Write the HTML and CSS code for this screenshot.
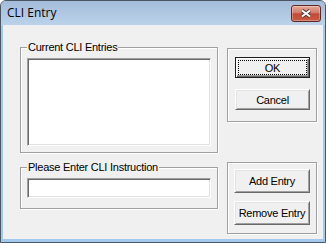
FILE: index.html
```html
<!DOCTYPE html>
<html lang="en">
<head>
    <meta charset="UTF-8">
    <title>CLI Entry</title>
    <link rel="stylesheet" href="styles.css">
</head>
<body>
    <div class="window">
        <div class="titlebar">
            <span class="title">CLI Entry</span>
            <button class="close" aria-label="Close">
                <svg width="12" height="9" viewBox="0 0 12 9">
                    <path d="M2 1.5 L10 7.5 M10 1.5 L2 7.5" stroke="#4a3a3a" stroke-width="3.8" fill="none"/>
                    <path d="M2 1.5 L10 7.5 M10 1.5 L2 7.5" stroke="#fff" stroke-width="2" fill="none"/>
                </svg>
            </button>
        </div>
        <div class="client">
            <div class="col-left">
                <div class="group group-entries">
                    <span class="legend">Current CLI Entries</span>
                    <div class="listbox"></div>
                </div>
                <div class="group group-input">
                    <span class="legend">Please Enter CLI Instruction</span>
                    <input class="edit" type="text">
                </div>
            </div>
            <div class="col-right">
                <div class="group group-dialog">
                    <button class="btn btn-default"><span class="focus">OK</span></button>
                    <button class="btn">Cancel</button>
                </div>
                <div class="group group-actions">
                    <button class="btn btn-tall">Add Entry</button>
                    <button class="btn btn-tall">Remove Entry</button>
                </div>
            </div>
        </div>
    </div>
</body>
</html>
```
FILE: styles.css
```css
* {
    box-sizing: border-box;
}
body {
    margin: 0;
    background: #fff;
    font-family: "Liberation Sans", Arial, sans-serif;
    font-size: 11px;
    letter-spacing: -0.25px;
    color: #000;
}
.window {
    width: 326px;
    height: 243px;
    border: 1px solid #4b5663;
    border-radius: 6px 6px 0 0;
    background: #a3caec;
    display: flex;
    flex-direction: column;
    overflow: hidden;
}
.titlebar {
    height: 24px;
    flex: none;
    display: flex;
    align-items: flex-start;
    justify-content: space-between;
    padding: 4px 4px 0 6px;
    background: linear-gradient(#a4bcda, #bbd2ea);
}
.title {
    font-family: "Open Sans", "Noto Sans", sans-serif;
    font-size: 12px;
    line-height: 16px;
    letter-spacing: 0;
}
.close {
    width: 30px;
    height: 17px;
    padding: 0;
    border: 1px solid #5b2a24;
    border-radius: 3px;
    background: linear-gradient(#e8a898, #d57a68 45%, #c24a35 52%, #cc5a42);
    box-shadow: inset 0 0 0 1px rgba(255, 255, 255, 0.3);
    display: flex;
    align-items: center;
    justify-content: center;
}
.client {
    height: 214px;
    flex: none;
    margin: 0 2px;
    background: #f0f0f0;
    display: flex;
    padding: 22px 0 0 17px;
}
.col-left {
    width: 198px;
    display: flex;
    flex-direction: column;
    gap: 14px;
}
.col-right {
    margin: 1px 0 0 9px;
    display: flex;
    flex-direction: column;
    gap: 40px;
}
/* etched group frame */
.group {
    position: relative;
    border: 1px solid #a0a0a0;
    box-shadow: inset 1px 1px #fff, 1px 1px #fff;
    display: flex;
    flex-direction: column;
    align-items: flex-start;
}
.legend {
    position: absolute;
    top: -7px;
    left: 6px;
    padding: 0 1px;
    line-height: 13px;
    background: #f0f0f0;
    white-space: nowrap;
}
.group-entries {
    height: 106px;
    padding: 10px 6px 0 6px;
}
.group-input {
    height: 42px;
    padding: 10px 6px 0 6px;
}
.group-dialog {
    width: 90px;
    height: 74px;
    padding: 8px 0 0 7px;
    gap: 11px;
}
.group-actions {
    width: 90px;
    height: 72px;
    padding: 6px 0 0 6px;
    gap: 8px;
}
/* sunken controls */
.listbox,
.edit {
    width: 184px;
    background: #fff;
    border: 1px solid;
    border-color: #a0a0a0 #fff #fff #a0a0a0;
    box-shadow: inset 1px 1px #696969, inset -1px -1px #e3e3e3;
}
.listbox {
    height: 88px;
}
.edit {
    height: 20px;
    margin: 0;
    padding: 0 3px;
    font: inherit;
    outline: none;
}
/* raised buttons */
.btn {
    width: 75px;
    height: 21px;
    padding: 0;
    font: inherit;
    letter-spacing: inherit;
    color: #000;
    background: #f0f0f0;
    border: 1px solid;
    border-color: #fff #696969 #696969 #fff;
    box-shadow: inset 1px 1px #e3e3e3, inset -1px -1px #a0a0a0;
    display: flex;
    align-items: center;
    justify-content: center;
}
.btn-default {
    border: 1px solid #202020;
    box-shadow: inset 1px 1px #fff, inset -1px -1px #696969, inset -2px -2px #a0a0a0;
    padding: 2px;
}
.focus {
    width: 100%;
    height: 100%;
    border: 1px dotted #000;
    display: flex;
    align-items: center;
    justify-content: center;
}
.btn-tall {
    width: 76px;
    height: 24px;
}
```
